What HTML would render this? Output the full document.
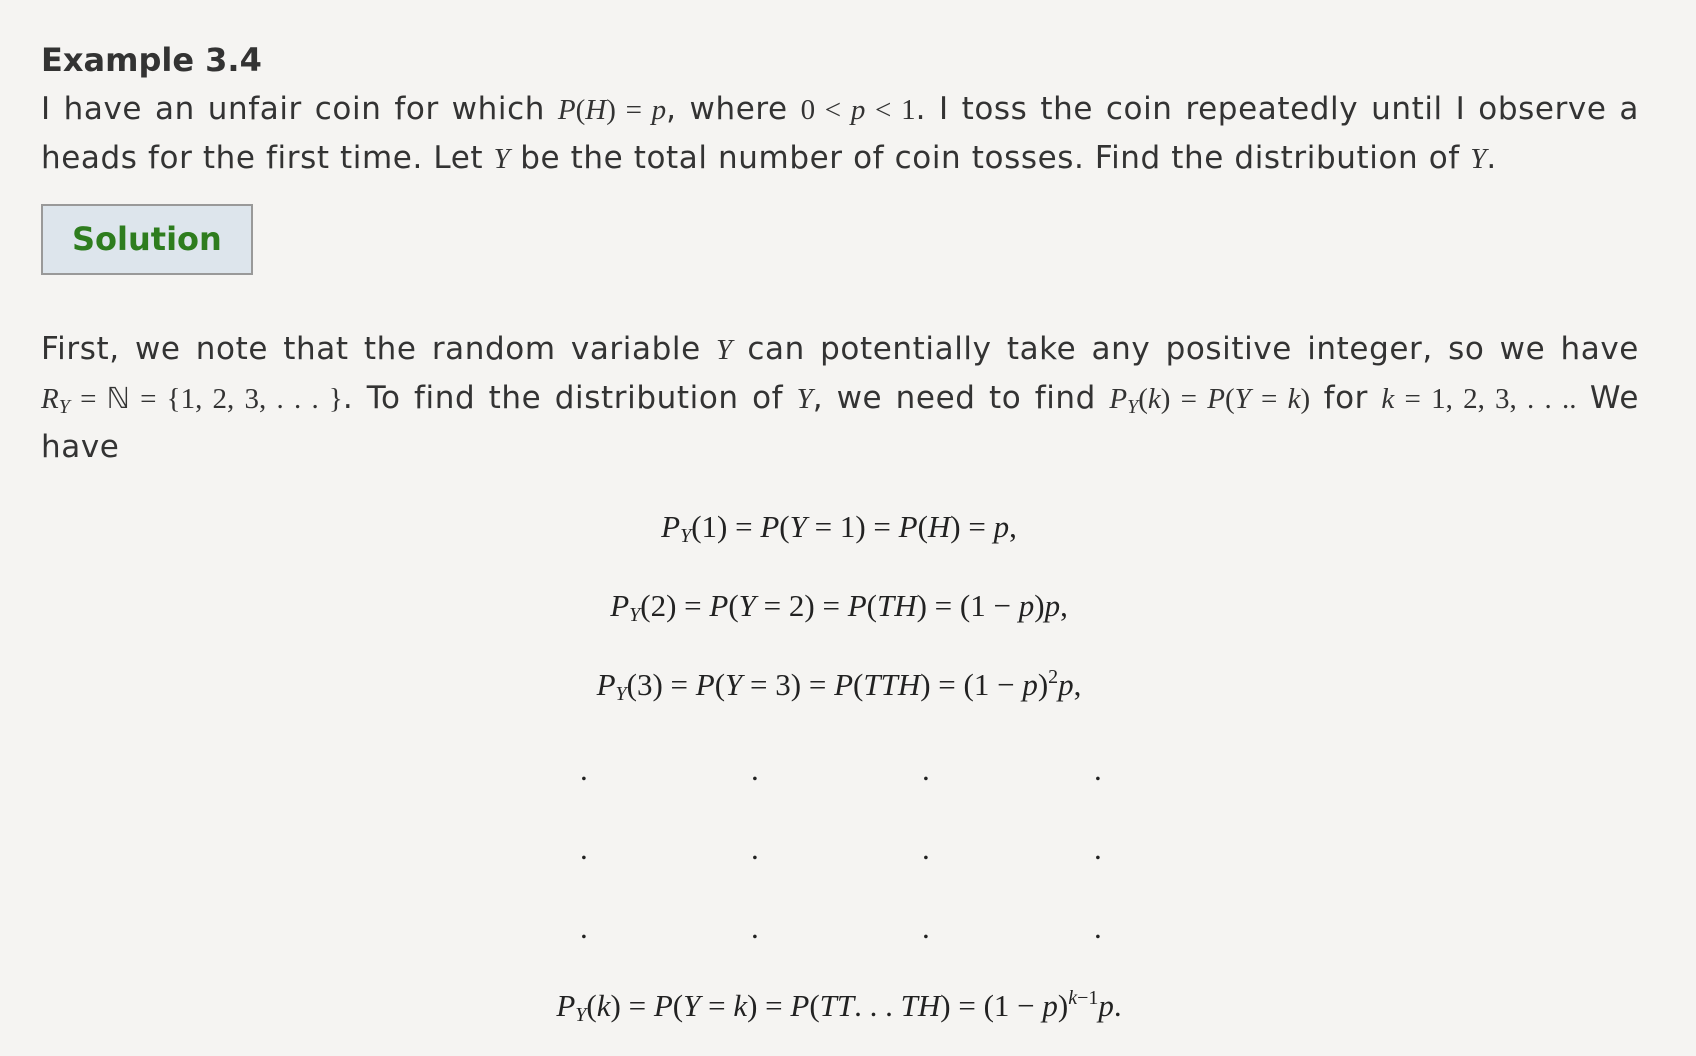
<!DOCTYPE html>
<html><head><meta charset="utf-8"><style>
html,body{margin:0;padding:0;background:#f5f4f2;}
body{width:1696px;height:1056px;overflow:hidden;position:relative;font-family:"DejaVu Sans","Liberation Sans",sans-serif;color:#333;}
.c{position:absolute;left:41px;width:1598px;}
h3{position:absolute;left:41px;top:38px;margin:0;font-size:32px;font-weight:bold;line-height:44px;}
.l{font-size:31px;line-height:48px;letter-spacing:0.6px;text-align:justify;text-align-last:justify;white-space:nowrap;}
.l.e{text-align-last:left;}
.m{font-family:"Liberation Serif",serif;font-size:29px;letter-spacing:0;}
i{font-family:"Liberation Serif",serif;}
.sol{position:absolute;left:41px;top:204px;width:208px;height:67px;border:2px solid #999;background:#dde5ec;color:#2e7d1e;font-weight:bold;font-size:32px;line-height:67px;text-indent:29px;box-sizing:content-box;}
.eq{position:absolute;left:0;width:1696px;text-align:center;font-family:"Liberation Serif",serif;font-size:31px;color:#222;}
sub{font-size:20px;vertical-align:-5px;line-height:0}
sup{font-size:20px;vertical-align:12px;line-height:0}
.dot{position:absolute;font-family:"Liberation Serif",serif;font-size:31px;color:#222;}
</style></head><body>
<h3>Example 3.4</h3>
<div class="c" style="top:85px">
<div class="l">I have an unfair coin for which <span class="m"><i>P</i>(<i>H</i>) = <i>p</i></span>, where <span class="m">0 &lt; <i>p</i> &lt; 1</span>. I toss the coin repeatedly until I observe a</div>
<div class="l e">heads for the first time. Let <span class="m"><i>Y</i></span> be the total number of coin tosses. Find the distribution of <span class="m"><i>Y</i></span>.</div>
</div>
<div class="sol">Solution</div>
<div class="c" style="top:325px">
<div class="l">First, we note that the random variable <span class="m"><i>Y</i></span> can potentially take any positive integer, so we have</div>
<div class="l"><span class="m"><i>R</i><sub><i>Y</i></sub> = ℕ = {1, 2, 3, . . . }</span>. To find the distribution of <span class="m"><i>Y</i></span>, we need to find <span class="m"><i>P</i><sub><i>Y</i></sub>(<i>k</i>) = <i>P</i>(<i>Y</i> = <i>k</i>)</span> for <span class="m"><i>k</i> = 1, 2, 3, . . ..</span> We</div>
<div class="l e">have</div>
</div>
<div class="eq" style="top:509px;left:-9px"><i>P</i><sub><i>Y</i></sub>(1) = <i>P</i>(<i>Y</i> = 1) = <i>P</i>(<i>H</i>) = <i>p</i>,</div>
<div class="eq" style="top:588px;left:-9px"><i>P</i><sub><i>Y</i></sub>(2) = <i>P</i>(<i>Y</i> = 2) = <i>P</i>(<i>TH</i>) = (1 − <i>p</i>)<i>p</i>,</div>
<div class="eq" style="top:667px;left:-9px"><i>P</i><sub><i>Y</i></sub>(3) = <i>P</i>(<i>Y</i> = 3) = <i>P</i>(<i>TTH</i>) = (1 − <i>p</i>)<sup>2</sup><i>p</i>,</div>
<div class="dot" style="left:580px;top:752px">.</div><div class="dot" style="left:751px;top:752px">.</div><div class="dot" style="left:922px;top:752px">.</div><div class="dot" style="left:1094px;top:752px">.</div>
<div class="dot" style="left:580px;top:831px">.</div><div class="dot" style="left:751px;top:831px">.</div><div class="dot" style="left:922px;top:831px">.</div><div class="dot" style="left:1094px;top:831px">.</div>
<div class="dot" style="left:580px;top:910px">.</div><div class="dot" style="left:751px;top:910px">.</div><div class="dot" style="left:922px;top:910px">.</div><div class="dot" style="left:1094px;top:910px">.</div>
<div class="eq" style="top:988px;left:-9px"><i>P</i><sub><i>Y</i></sub>(<i>k</i>) = <i>P</i>(<i>Y</i> = <i>k</i>) = <i>P</i>(<i>TT</i>. . . <i>TH</i>) = (1 − <i>p</i>)<sup><i>k</i>−1</sup><i>p</i>.</div>
</body></html>
